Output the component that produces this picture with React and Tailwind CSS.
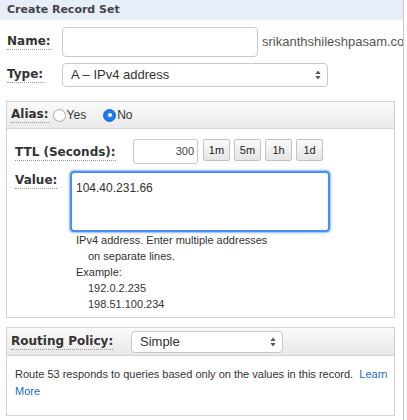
import React from 'react';

const labelFont = { fontFamily: '"DejaVu Sans", Verdana, sans-serif' };

function Label({ children, className = '' }) {
  return (
    <span
      style={labelFont}
      className={`text-[12px] font-bold text-[#333] border-b border-dotted border-[#999] leading-[15px] whitespace-nowrap ${className}`}
    >
      {children}
    </span>
  );
}

function Arrows() {
  return (
    <svg width="6" height="10" viewBox="0 0 6 10" className="shrink-0">
      <path d="M3 0.5 L5.6 4 L0.4 4 Z" fill="#555" />
      <path d="M3 9.5 L5.6 6 L0.4 6 Z" fill="#555" />
    </svg>
  );
}

function Radio({ checked }) {
  if (checked) {
    return (
      <span className="w-[13px] h-[13px] rounded-full bg-[#1b7cf5] border border-[#1669d6] flex items-center justify-center">
        <span className="w-[4px] h-[4px] rounded-full bg-white" />
      </span>
    );
  }
  return <span className="w-[13px] h-[13px] rounded-full bg-white border border-[#a8a8a8]" />;
}

function TtlButton({ children }) {
  return (
    <span className="w-[27px] h-[22px] flex items-center justify-center rounded-[2px] border border-[#c2c2c2] bg-linear-to-b from-[#fafafa] to-[#e6e6e6] text-[11px] text-[#222]">
      {children}
    </span>
  );
}

export default function App() {
  return (
    <div className="w-[407px] h-[420px] bg-white" style={{ fontFamily: '"Liberation Sans", Arial, sans-serif' }}>
      <div className="w-[404px] h-[420px] border-r border-[#c9c9c9] overflow-hidden">
        {/* header */}
        <div className="h-[20px] bg-[#e7eef9] pl-[7px] flex items-center">
          <span style={labelFont} className="text-[11px] font-bold text-[#444]">
            Create Record Set
          </span>
        </div>

        {/* name */}
        <div className="mt-[7px] flex items-center pl-[7px]">
          <div className="w-[55px] shrink-0 flex">
            <Label>Name:</Label>
          </div>
          <div className="w-[196px] h-[30px] shrink-0 rounded-[4px] border border-[#c8c8c8] bg-white" />
          <span className="ml-[4px] text-[13px] text-[#555] whitespace-nowrap">srikanthshileshpasam.com</span>
        </div>

        {/* type */}
        <div className="mt-[6px] flex items-center pl-[7px]">
          <div className="w-[55px] shrink-0 flex">
            <Label>Type:</Label>
          </div>
          <div className="w-[266px] h-[24px] rounded-[4px] border border-[#c8c8c8] bg-white flex items-center justify-between pl-[8px] pr-[6px]">
            <span className="text-[13px] text-[#333]">A – IPv4 address</span>
            <Arrows />
          </div>
        </div>

        {/* alias box */}
        <div className="mt-[14px] ml-[6px] w-[389px] border border-[#d2d2d2]">
          <div className="h-[27px] bg-linear-to-b from-[#fafafa] to-[#eaeaea] border-b border-[#d2d2d2] flex items-center pl-[4px]">
            <Label>Alias:</Label>
            <span className="ml-[4px] flex items-center">
              <Radio />
              <span className="ml-[1px] text-[12px] text-[#333]">Yes</span>
            </span>
            <span className="ml-[17px] flex items-center">
              <Radio checked />
              <span className="ml-[1px] text-[12px] text-[#333]">No</span>
            </span>
          </div>

          <div className="pt-[10px] pl-[8px] pb-[5px]">
            <div className="flex items-start">
              <div className="w-[118px] shrink-0 pt-[6px] flex">
                <Label>TTL (Seconds):</Label>
              </div>
              <div className="w-[65px] h-[25px] rounded-[3px] border border-[#c8c8c8] bg-white flex items-center justify-end pr-[3px] text-[11px] text-[#444]">
                300
              </div>
              <div className="ml-[5px] flex gap-[4px]">
                <TtlButton>1m</TtlButton>
                <TtlButton>5m</TtlButton>
                <TtlButton>1h</TtlButton>
                <TtlButton>1d</TtlButton>
              </div>
            </div>

            <div className="mt-[7px] flex items-start">
              <div className="w-[55px] shrink-0 pt-[2px] flex">
                <Label>Value:</Label>
              </div>
              <div className="w-[260px] h-[61px] rounded-[4px] border-2 border-[#4a8df5] shadow-[0_0_2px_1px_#8db8f7] bg-white pl-[4px] pt-[6px] text-[12px] text-[#333]">
                104.40.231.66
              </div>
            </div>

            <div className="ml-[61px] text-[11px] leading-[16px] text-[#333]">
              <div>IPv4 address. Enter multiple addresses</div>
              <div className="pl-[12px]">on separate lines.</div>
              <div>Example:</div>
              <div className="pl-[12px]">192.0.2.235</div>
              <div className="pl-[12px]">198.51.100.234</div>
            </div>
          </div>
        </div>

        {/* routing box */}
        <div className="mt-[9px] ml-[6px] w-[389px] border border-[#d2d2d2]">
          <div className="h-[28px] bg-linear-to-b from-[#fafafa] to-[#e8e8e8] border-b border-[#d2d2d2] flex items-center pl-[4px]">
            <div className="w-[120px] shrink-0 flex">
              <Label>Routing Policy:</Label>
            </div>
            <div className="w-[152px] h-[22px] rounded-[4px] border border-[#c8c8c8] bg-white flex items-center justify-between pl-[8px] pr-[6px]">
              <span className="text-[13px] text-[#333]">Simple</span>
              <Arrows />
            </div>
          </div>
          <div className="pt-[10px] pb-[15px] pl-[8px] pr-[4px] text-[11px] leading-[17px] text-[#333]">
            Route 53 responds to queries based only on the values in this record.&nbsp;{' '}
            <span className="text-[#1a6fc9]">Learn More</span>
          </div>
        </div>
      </div>
    </div>
  );
}
